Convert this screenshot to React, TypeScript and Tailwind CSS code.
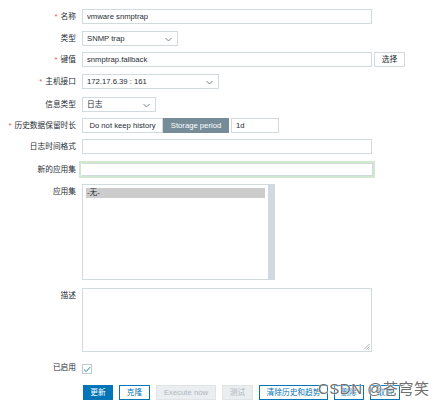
import React from "react";

const font = { fontFamily: '"Liberation Sans", "Noto Sans CJK SC", sans-serif' };

function Label({ text, required }: { text: string; required?: boolean }) {
  return (
    <div className="flex h-[15px] w-[76px] shrink-0 items-center justify-end text-[#1f2c33]">
      {required && <span className="mr-[3px] text-[#e45959]">*</span>}
      {text}
    </div>
  );
}

function Chevron() {
  return (
    <svg width="7" height="5" viewBox="0 0 7 5" className="absolute right-[5px] top-[5px]">
      <path d="M0.5 1 L3.5 4 L6.5 1" fill="none" stroke="#6b7a83" strokeWidth="0.9" />
    </svg>
  );
}

function Select({ value, width }: { value: string; width: string }) {
  return (
    <div
      className={`relative flex h-[15px] items-center border border-[#d3dade] bg-white pl-[4px] text-[#1f2c33] ${width}`}
    >
      {value}
      <Chevron />
    </div>
  );
}

function Input({ value = "", width = "w-[290px]" }: { value?: string; width?: string }) {
  return (
    <div
      className={`flex h-[15px] items-center border border-[#d3dade] bg-white pl-[4px] text-[#1f2c33] ${width}`}
    >
      {value}
    </div>
  );
}

function Btn({ text, kind }: { text: string; kind: "primary" | "outline" | "disabled" }) {
  const cls =
    kind === "primary"
      ? "bg-[#0275b8] border-[#0275b8] text-white"
      : kind === "outline"
        ? "bg-white border-[#0275b8] text-[#0275b8]"
        : "bg-[#ebeef0] border-[#dfe4e7] text-[#acb7bd]";
  return (
    <div className={`flex h-[15px] items-center justify-center border px-[6px] ${cls}`}>{text}</div>
  );
}

export default function App() {
  return (
    <div className="relative h-[407px] w-[447px] overflow-hidden bg-white text-[7.7px] leading-none" style={font}>
      <div className="flex flex-col">
        <div className="mt-[9px] flex gap-[6px]">
          <Label text="名称" required />
          <Input value="vmware snmptrap" />
        </div>
        <div className="mt-[7px] flex gap-[6px]">
          <Label text="类型" />
          <Select value="SNMP trap" width="w-[96px]" />
        </div>
        <div className="mt-[6px] flex gap-[6px]">
          <Label text="键值" required />
          <Input value="snmptrap.fallback" />
          <div className="-ml-[4px] flex h-[15px] w-[31px] items-center justify-center border border-[#d3dade] bg-white text-[#1f2c33]">
            选择
          </div>
        </div>
        <div className="mt-[7px] flex gap-[6px]">
          <Label text="主机接口" required />
          <Select value="172.17.6.39 : 161" width="w-[137px]" />
        </div>
        <div className="mt-[8px] flex gap-[6px]">
          <Label text="信息类型" />
          <Select value="日志" width="w-[74px]" />
        </div>
        <div className="mt-[6px] flex gap-[6px]">
          <Label text="历史数据保留时长" required />
          <div className="flex">
            <div className="flex h-[15px] w-[81px] items-center justify-center border border-[#d3dade] bg-white text-[#1f2c33]">
              Do not keep history
            </div>
            <div className="flex h-[15px] w-[66px] items-center justify-center border border-[#768d99] bg-[#768d99] text-white">
              Storage period
            </div>
            <div className="ml-[2px]">
              <Input value="1d" width="w-[48px]" />
            </div>
          </div>
        </div>
        <div className="mt-[6px] flex gap-[6px]">
          <Label text="日志时间格式" />
          <Input />
        </div>
        <div className="mt-[7px] flex gap-[6px]">
          <div className="pt-[1px]">
            <Label text="新的应用集" />
          </div>
          <div className="-ml-[3px] h-[17px] w-[296px] border-[2px] border-[#cfe8cf] bg-white">
            <div className="h-full w-full border border-[#d3dade] border-l-transparent"></div>
          </div>
        </div>
        <div className="mt-[6px] flex gap-[6px]">
          <Label text="应用集" />
          <div className="flex h-[96px] w-[193px] border border-[#d3dade] bg-white">
            <div className="flex-1 px-[3px] pt-[3px]">
              <div className="flex h-[10px] items-center bg-[#cccccc] pl-[1px] text-[#1f2c33]">-无-</div>
            </div>
            <div className="w-[6px] bg-[#d0d9de]"></div>
          </div>
        </div>
        <div className="mt-[8px] flex gap-[6px]">
          <Label text="描述" />
          <div className="relative h-[64px] w-[290px] border border-[#d3dade] bg-white">
            <svg width="7" height="7" viewBox="0 0 7 7" className="absolute bottom-[1px] right-[1px]">
              <path d="M6.5 1 L1 6.5 M6.5 3.5 L3.5 6.5 M6.5 5.5 L5.5 6.5" stroke="#8a969c" strokeWidth="0.7" />
            </svg>
          </div>
        </div>
        <div className="mt-[8px] flex gap-[6px]">
          <Label text="已启用" />
          <div className="mt-[4px] flex h-[10px] w-[10px] items-center justify-center border border-[#c0cbd1] bg-white">
            <svg width="8" height="7" viewBox="0 0 8 7">
              <path d="M1 3.5 L3.2 5.6 L7 1.2" fill="none" stroke="#0275b8" strokeWidth="0.9" />
            </svg>
          </div>
        </div>
        <div className="mt-[10px] flex">
          <div className="ml-[83px] flex gap-[6px]">
            <div className="w-[30px]"><Btn text="更新" kind="primary" /></div>
            <div className="w-[31px]"><Btn text="克隆" kind="outline" /></div>
            <div className="w-[60px]"><Btn text="Execute now" kind="disabled" /></div>
            <div className="w-[31px]"><Btn text="测试" kind="disabled" /></div>
            <div className="w-[69px]"><Btn text="清除历史和趋势" kind="outline" /></div>
            <div className="w-[30px]"><Btn text="删除" kind="outline" /></div>
            <div className="w-[30px]"><Btn text="取消" kind="outline" /></div>
          </div>
        </div>
      </div>
      <div
        className="absolute left-[318px] top-[381px] text-[15px] tracking-[0.5px] text-[#707070] [text-shadow:0_0_2px_#fff,0_0_1px_#fff]"
        style={font}
      >
        CSDN @苍穹笑
      </div>
    </div>
  );
}
